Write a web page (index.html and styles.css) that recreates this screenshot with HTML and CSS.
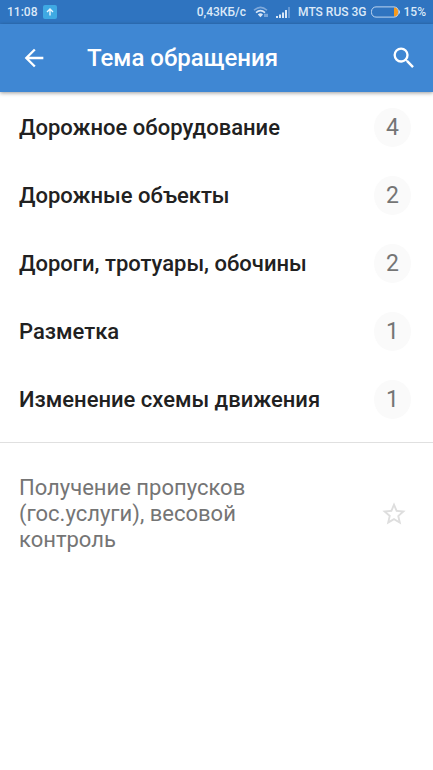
FILE: index.html
```html
<!DOCTYPE html>
<html lang="ru">
<head>
<meta charset="utf-8">
<meta name="viewport" content="width=device-width, initial-scale=1">
<title>Тема обращения</title>
<link rel="stylesheet" href="styles.css">
</head>
<body>
<div class="status">
  <span>11:08</span>
  <svg class="upload" width="14" height="14" viewBox="0 0 14 14" aria-hidden="true"><rect width="14" height="14" rx="2" fill="#3fa9e3"/><path d="M7 10.5V4.2M4 7l3-3 3 3" fill="none" stroke="#e8f6ff" stroke-width="1.4"/></svg>
  <span class="speed">0,43КБ/с</span>
  <svg class="wifi" width="16" height="12" viewBox="0 0 16 12" aria-hidden="true"><path d="M1 4.3Q7.500-1.500 14 4.300" fill="none" stroke="#7fa9da" stroke-width="1.500"/><path d="M3 6.600Q7.500 2.600 12 6.600" fill="none" stroke="#d9e7f7" stroke-width="1.600"/><path d="M4.800 8.400Q7.500 6.200 10 8.400L7.500 11.300z" fill="#d9e7f7"/><path d="M12 11V7.800M14 7.800V11" fill="none" stroke="#a9c6e9" stroke-width="1.200"/></svg>
  <svg class="signal" width="15" height="11" viewBox="0 0 15 11" aria-hidden="true"><path d="M0 9h2v2H0zM3 7.500h2V11H3zM6 5.500h2V11H6zM9 3h2v8H9z" fill="#d9e7f7"/><path d="M12 0h2v11h-2z" fill="#6598d3"/></svg>
  <span class="carrier">MTS RUS 3G</span>
  <svg class="battery" width="29" height="12" viewBox="0 0 29 12" aria-hidden="true"><path d="M23 1.500h2a2 2 0 0 1 2 2v5a2 2 0 0 1-2 2h-2z" fill="#f79a1c"/><rect x=".5" y=".9" width="27" height="10.200" rx="4.500" fill="none" stroke="#bdd5f0"/><path d="M28.500 4.500v3" stroke="#bdd5f0"/></svg>
  <span>15%</span>
</div>
<header class="appbar">
  <button class="icon-button" type="button" aria-label="Назад"><svg width="28" height="28" viewBox="0 0 24 24"><path d="M20 11H7.830l5.590-5.590L12 4l-8 8 8 8 1.410-1.410L7.830 13H20z" fill="#fff"/></svg></button>
  <h1>Тема обращения</h1>
  <button class="icon-button" type="button" aria-label="Поиск"><svg width="28" height="28" viewBox="0 0 24 24"><path d="M15.500 14h-.79l-.28-.27A6.471 6.471 0 0 0 16 9.500 6.500 6.500 0 1 0 9.500 16c1.610 0 3.090-.59 4.230-1.570l.27.28v.79l5 4.990L20.490 19zm-6 0a4.500 4.500 0 1 1 0-9 4.500 4.500 0 0 1 0 9z" fill="#fff"/></svg></button>
</header>
<main>
  <ul class="topics">
    <li><a href="#equipment"><span>Дорожное оборудование</span><span class="count">4</span></a></li>
    <li><a href="#objects"><span>Дорожные объекты</span><span class="count">2</span></a></li>
    <li><a href="#roads"><span>Дороги, тротуары, обочины</span><span class="count">2</span></a></li>
    <li><a href="#marking"><span>Разметка</span><span class="count">1</span></a></li>
    <li><a href="#scheme"><span>Изменение схемы движения</span><span class="count">1</span></a></li>
  </ul>
  <div class="service">
    <a href="#permits">Получение пропусков (гос.услуги), весовой контроль</a>
    <button class="icon-button" type="button" aria-label="В избранное"><svg width="28" height="28" viewBox="0 0 24 24"><path d="M22 9.240l-7.190-.62L12 2 9.190 8.630 2 9.240l5.460 4.730L5.820 21 12 17.270 18.180 21l-1.630-7.030zM12 15.400l-3.760 2.270 1-4.280-3.320-2.880 4.380-.38L12 6.100l1.710 4.040 4.380.38-3.320 2.880 1 4.280z" fill="#dedede"/></svg></button>
  </div>
</main>
</body>
</html>
```

FILE: styles.css
```css
* {
  box-sizing: border-box;
}

body {
  margin: 0;
  background: #fff;
  color: #212121;
  font-family: Roboto, "Noto Sans", sans-serif;
}

a {
  color: inherit;
  text-decoration: none;
}

svg {
  display: block;
  flex: none;
}

.status {
  display: flex;
  align-items: center;
  height: 24px;
  padding: 0 7px;
  background: #2f74c0;
  color: #dce9f8;
  font-size: 12px;
  font-weight: 500;
  white-space: nowrap;
}

.upload {
  margin-left: 6px;
}

.speed {
  margin-left: auto;
}

.wifi,
.signal,
.carrier {
  margin-left: 7px;
}

.battery {
  margin: 0 4px;
}

.appbar {
  display: flex;
  align-items: center;
  height: 68px;
  padding: 0 15px 0 20px;
  background: #3f87d3;
  box-shadow: 0 1px 4px rgba(0, 0, 0, 0.4);
  color: #fff;
}

.appbar h1 {
  flex: 1;
  margin: 0 0 0 39px;
  font-size: 24px;
  font-weight: 500;
}

.icon-button {
  flex: none;
  padding: 0;
  border: 0;
  background: none;
}

.topics {
  margin: 0;
  padding: 1px 0 9px;
  border-bottom: 1px solid #e0e0e0;
  list-style: none;
}

.topics a {
  display: flex;
  align-items: center;
  justify-content: space-between;
  height: 68px;
  padding: 0 22px 0 19px;
  font-size: 22px;
  font-weight: 500;
}

.count {
  display: grid;
  place-items: center;
  width: 37px;
  height: 39px;
  border-radius: 50%;
  background: #fafafa;
  color: #757575;
  font-size: 23px;
  font-weight: 400;
}

.service {
  display: flex;
  align-items: center;
  justify-content: space-between;
  padding: 32px 25px 32px 19px;
  color: #757575;
  font-size: 22px;
  line-height: 26px;
}

.service a {
  max-width: 260px;
}
```
